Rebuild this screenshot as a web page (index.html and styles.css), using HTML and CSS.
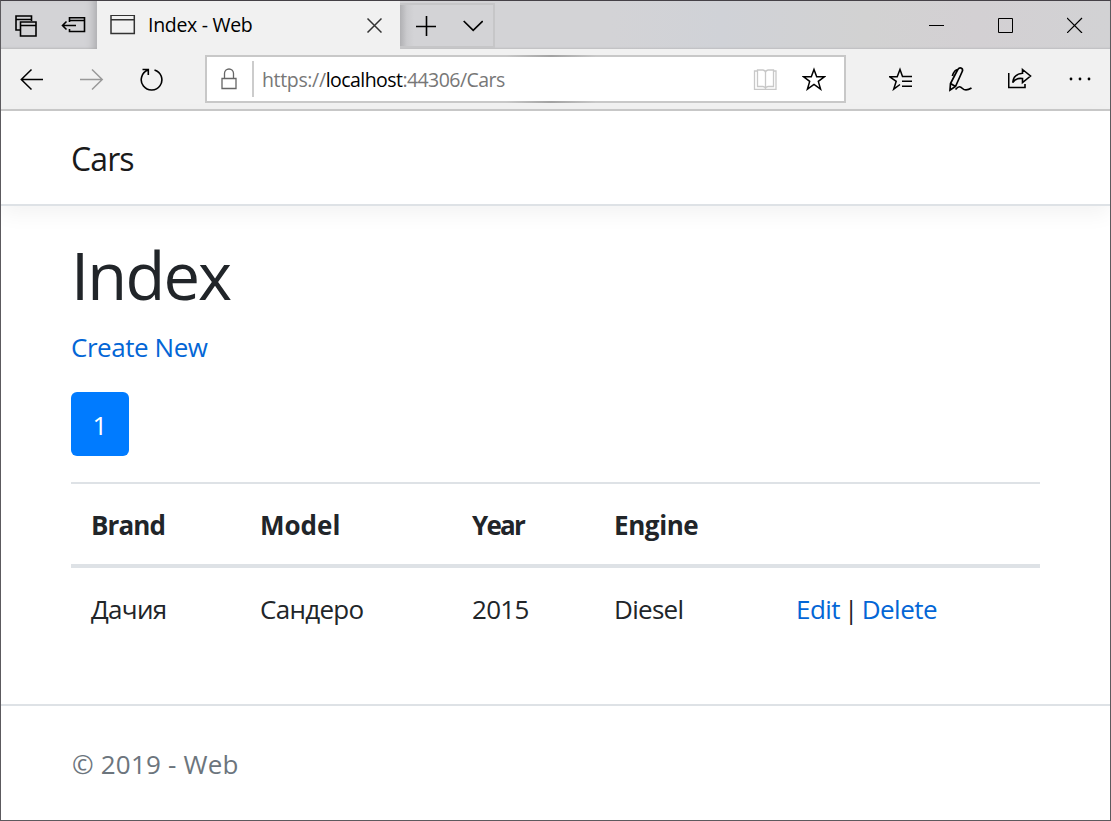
FILE: index.html
```html
<!DOCTYPE html>
<html lang="en">
<head>
<meta charset="utf-8">
<title>Index - Web</title>
<link rel="stylesheet" href="styles.css">
</head>
<body>
<div class="window">
  <div class="titlebar">
    <div class="tab-tools">
      <svg class="icon" width="24" height="24" viewBox="14 13 24 24"><path d="M20 30H16V16H31.500V21M16 19.500H31.500M20.500 22H36V36H20.500ZM20.500 25.500H36" stroke-width="1.600"/></svg>
      <svg class="icon" width="26" height="18" viewBox="61 16 26 18"><path d="M69.500 22V17.700H84.500V31.500H69.500V29M69.500 20.500H84.500M76 25.500H62.500M66.500 21.500L62.500 25.500L66.500 29.500" stroke-width="1.600"/></svg>
    </div>
    <div class="tab">
      <svg class="icon tab-page" width="26" height="20" viewBox="110 14.500 26 20"><path d="M111 14.800H134.300V33H111ZM111 19.200H134.300" stroke-width="1.500"/></svg>
      <span class="tab-title">Index - Web</span>
      <svg class="icon tab-close" width="16" height="16" viewBox="366 17 16 16"><path d="M367.500 18.500L381.500 32.500M381.500 18.500L367.500 32.500" stroke-width="1.500"/></svg>
    </div>
    <div class="tab-actions">
      <svg class="icon" width="20" height="20" viewBox="416 16 20 20"><path d="M426.500 16V36M416 26.500H436" stroke-width="1.600"/></svg>
      <svg class="icon" width="20" height="12" viewBox="463 20 20 12"><path d="M463.700 21L473.200 30.300L482.700 21" stroke-width="1.700"/></svg>
    </div>
    <div class="window-controls">
      <svg class="icon" width="16" height="16" viewBox="929 17 16 16"><path d="M929 25.500H944" stroke-width="1"/></svg>
      <svg class="icon" width="16" height="16" viewBox="998 17 16 16"><path d="M998.500 18.500H1012.500V32.500H998.500Z" stroke-width="1"/></svg>
      <svg class="icon" width="16" height="16" viewBox="1067 17 16 16"><path d="M1067 18L1082 33M1082 18L1067 33" stroke-width="1.200"/></svg>
    </div>
  </div>

  <div class="toolbar">
    <div class="history">
      <svg class="icon" width="24" height="24" viewBox="20 67 24 24"><path d="M43 79.500H21M31.500 69.500L21.300 79.500L31.500 89.500" stroke-width="1.500"/></svg>
      <svg class="icon icon-disabled" width="24" height="24" viewBox="80 67 24 24"><path d="M80 79.500H102M92 69.500L102.200 79.500L92 89.500" stroke-width="1.500"/></svg>
      <svg class="icon" width="24" height="24" viewBox="140 67 24 24"><path d="M154.500 69.900A10.300 10.300 0 1 1 148 70.100M142.500 69.500H148.300V75" stroke-width="1.600"/></svg>
    </div>
    <div class="address">
      <svg class="icon icon-lock" width="18" height="22" viewBox="220.500 68 18 22"><path d="M222.500 78.500H236.500V88.500H222.500ZM225 78.500V73.500A4.500 4.500 0 0 1 234 73.500V78.500" stroke-width="1.300"/></svg>
      <span class="address-divider"></span>
      <span class="url"><span class="url-scheme">https://</span><span class="url-host">localhost</span>:44306/Cars</span>
      <svg class="icon icon-book" width="24" height="22" viewBox="753 68.500 24 22"><path d="M757.500 71.500H754.500V90H776V71.500H773.500M757.500 70.500H763Q765.500 71 765.500 73Q765.500 71 768 70.500H773.500V87H768Q765.500 87.500 765.500 89Q765.500 87.500 763 87H757.500ZM765.500 72V89.500" stroke-width="1.300"/></svg>
      <svg class="icon" width="24" height="24" viewBox="802 67 24 24"><path d="M814 69.500L816.700 76.800H824.300L818.300 81.400L820.600 89.200L814 84.500L807.400 89.200L809.700 81.400L803.700 76.800H811.300Z" stroke-width="1.500"/></svg>
    </div>
    <div class="browser-actions">
      <svg class="icon" width="24" height="24" viewBox="889 67 24 24"><path d="M912 76.500H902.500L900 69.500L897.200 76.800H889.800L896.200 81.300L893.700 89.200L900 84.500M903.500 76.500H912M902 81.300H912M902 86.200H912" stroke-width="1.500"/></svg>
      <svg class="icon" width="26" height="26" viewBox="948 66 26 26"><path d="M957.800 69.500Q959.500 67 961.500 68.200Q963.200 69.300 962.200 71.500L955.500 86.500L950 90L950.500 83.500ZM950.500 83.500L955.500 86.500M957.800 69.500Q954.500 69.500 952.300 76M955.500 89.500C959 85.500 960.500 86.500 962.500 88.500C965 91 967.500 90.500 971.500 88" stroke-width="1.700"/></svg>
      <svg class="icon" width="26" height="24" viewBox="1008 67 26 24"><path d="M1008.700 73V87.500H1025V84M1022.500 69.500L1030.500 76L1022.500 82.500V78.500Q1016 77.500 1012.700 82.500Q1013.500 74 1022.500 73.300Z" stroke-width="1.600"/></svg>
      <svg class="icon" width="24" height="4" viewBox="1069 77 24 4"><g fill="#000" stroke="none"><circle cx="1071" cy="79" r="1.400"/><circle cx="1080" cy="79" r="1.400"/><circle cx="1089" cy="79" r="1.400"/></g></svg>
    </div>
  </div>

  <header class="navbar"><a class="brand">Cars</a></header>

  <main class="content">
    <h1 class="heading">Index</h1>
    <p class="create"><a class="link">Create New</a></p>
    <div class="pagination"><a class="page-link">1</a></div>
    <table class="table">
      <colgroup><col class="col-brand"><col class="col-model"><col class="col-year"><col class="col-engine"><col></colgroup>
      <thead><tr><th class="h-brand">Brand</th><th class="h-model">Model</th><th class="h-year">Year</th><th>Engine</th><th></th></tr></thead>
      <tbody><tr><td>Дачия</td><td>Сандеро</td><td>2015</td><td>Diesel</td><td class="c-actions"><a class="link">Edit</a> | <a class="link">Delete</a></td></tr></tbody>
    </table>
  </main>

  <footer class="footer"><span class="copyright">© 2019 - Web</span></footer>
</div>
</body>
</html>
```

FILE: styles.css
```css
* { box-sizing: border-box; }

body {
  margin: 0;
  font-family: "Open Sans", "Noto Sans", sans-serif;
  font-size: 26px;
  line-height: 40px;
  color: #212529;
  background: #fff;
}

.window {
  display: flex;
  flex-direction: column;
  width: 1111px;
  height: 821px;
  border: 1px solid #5c5a5e;
  border-top-color: #454147;
  overflow: hidden;
}

.icon {
  display: block;
  flex: none;
  fill: none;
  stroke: #000;
}

.titlebar {
  display: flex;
  flex: none;
  height: 48px;
  background: linear-gradient(90deg, #d3d3d6 0%, #d3d3d6 55%, #d0d2d7 65%, #d2d2d2 78%, #d3d0d3 88%, #d2d2d4 100%);
  box-shadow: inset 0 -2px 2px -1px #bdbdc0;
}

.tab-tools {
  display: flex;
  align-items: center;
  gap: 23px;
  width: 96px;
  padding-left: 13px;
  box-shadow: inset -9px 0 8px -6px #a9a9ac;
}

.tab {
  display: flex;
  align-items: center;
  width: 303px;
  padding: 0 18px 0 13px;
  background: #f1f1f1;
}

.tab-page, .tab-close { stroke: #333; }

.tab-title {
  flex: 1;
  margin-left: 12px;
  font-size: 19.500px;
  letter-spacing: -0.300px;
  color: #000;
}

.tab-actions {
  display: flex;
  align-items: center;
  gap: 27px;
  width: 95px;
  margin: 2px 0 1px;
  padding-left: 16px;
  border: 2px solid #c6c6c8;
  border-left: 0;
  background: linear-gradient(90deg, #b0b0b3 0, #cbcbce 7px, #d3d3d6 14px);
}

.window-controls {
  display: flex;
  align-items: center;
  gap: 53px;
  margin-left: auto;
  padding-right: 27px;
}

.toolbar {
  display: flex;
  flex: none;
  height: 62px;
  padding: 6px 17px 0 19px;
  background: #f1f1f1;
  border-bottom: 2px solid #c9c9c9;
}

.history {
  display: flex;
  align-items: center;
  gap: 36px;
  width: 185px;
  height: 48px;
}

.icon-disabled { stroke: #999; }

.address {
  display: flex;
  align-items: center;
  width: 641px;
  height: 48px;
  padding: 0 18px 0 13px;
  background: #fff;
  border: 2px solid #c8c8c8;
  border-image: linear-gradient(90deg, #c8c8c8 47%, #a2a2a2 54%, #c8c8c8 61%) 2;
}

.icon-lock { stroke: #666; }

.address-divider {
  width: 2px;
  height: 36px;
  margin: 0 8px 0 14px;
  background: #ccc;
}

.url {
  flex: 1;
  padding-top: 2px;
  font-size: 19.500px;
  letter-spacing: -0.560px;
  color: #777;
}

.url-scheme { letter-spacing: -0.350px; }

.url-host { color: #000; }

.icon-book {
  margin-right: 25px;
  stroke: #c8c8c8;
}

.browser-actions {
  display: flex;
  align-items: center;
  justify-content: space-between;
  width: 204px;
  height: 48px;
  margin-left: auto;
}

.navbar {
  flex: none;
  height: 95px;
  padding: 28px 70px 0;
  border-bottom: 2px solid #dee2e6;
  box-shadow: 0 8px 20px rgba(0, 0, 0, 0.050);
}

.brand {
  font-size: 32px;
  letter-spacing: -0.900px;
  color: #1a1a1a;
}

.content {
  flex: none;
  height: 498px;
  padding: 30px 70px 0;
}

.heading {
  margin: 0;
  font-size: 65px;
  font-weight: 400;
  line-height: 78px;
  letter-spacing: -1.800px;
}

.create {
  margin: 13px 0 25px;
  letter-spacing: -0.450px;
}

.link { color: #0366d6; }

.pagination { display: flex; }

.page-link {
  width: 58px;
  height: 64px;
  line-height: 66px;
  text-align: center;
  color: #fff;
  background: #007bff;
  border-radius: 6px;
}

.table {
  width: 969px;
  margin-top: 26px;
  table-layout: fixed;
  border-collapse: separate;
  border-spacing: 0;
}

.table th, .table td {
  padding: 21px 20px;
  text-align: left;
  white-space: nowrap;
  letter-spacing: -0.700px;
}

.table th {
  height: 86px;
  padding: 2px 20px 0;
  border-top: 2px solid #dee2e6;
  border-bottom: 4px solid #dee2e6;
  font-weight: 700;
  letter-spacing: -0.400px;
}

.table .h-brand { letter-spacing: -0.900px; }
.table .h-model { letter-spacing: 0; }
.table .h-year { letter-spacing: -1.800px; }

.table .c-actions {
  letter-spacing: -0.550px;
  word-spacing: -2.200px;
}

.col-brand { width: 169px; }
.col-model { width: 212px; }
.col-year { width: 142px; }
.col-engine { width: 182px; }

.footer {
  flex: 1;
  padding: 38px 71px 0;
  border-top: 2px solid #dee2e6;
  letter-spacing: 0.200px;
  color: #6c757d;
}
```
